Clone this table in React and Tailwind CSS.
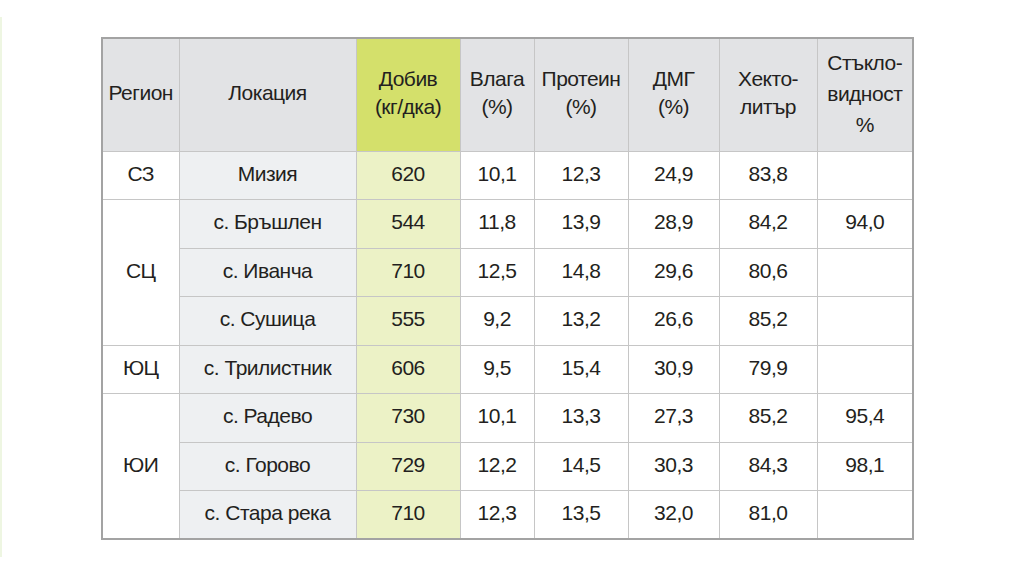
import React from 'react';

const rows = [
  { region: 'СЗ', span: 1, loc: 'Мизия', yield: '620', moist: '10,1', prot: '12,3', dmg: '24,9', hl: '83,8', glass: '' },
  { region: 'СЦ', span: 3, loc: 'с. Бръшлен', yield: '544', moist: '11,8', prot: '13,9', dmg: '28,9', hl: '84,2', glass: '94,0' },
  { loc: 'с. Иванча', yield: '710', moist: '12,5', prot: '14,8', dmg: '29,6', hl: '80,6', glass: '' },
  { loc: 'с. Сушица', yield: '555', moist: '9,2', prot: '13,2', dmg: '26,6', hl: '85,2', glass: '' },
  { region: 'ЮЦ', span: 1, loc: 'с. Трилистник', yield: '606', moist: '9,5', prot: '15,4', dmg: '30,9', hl: '79,9', glass: '' },
  { region: 'ЮИ', span: 3, loc: 'с. Радево', yield: '730', moist: '10,1', prot: '13,3', dmg: '27,3', hl: '85,2', glass: '95,4' },
  { loc: 'с. Горово', yield: '729', moist: '12,2', prot: '14,5', dmg: '30,3', hl: '84,3', glass: '98,1' },
  { loc: 'с. Стара река', yield: '710', moist: '12,3', prot: '13,5', dmg: '32,0', hl: '81,0', glass: '' },
];

const cell = 'border-[1.5px] border-[#c6c6c6] text-center align-middle px-0 pt-0 pb-[3px]';

export default function App() {
  return (
    <div
      lang="bg"
      className="flex h-[576px] w-[1024px] bg-white text-[#231f20]"
      style={{ fontFamily: '"Liberation Sans", Arial, sans-serif' }}
    >
      {/* faint page edge */}
      <div className="mt-[17px] h-[540px] w-[2px] bg-[#eef6e2]" />

      <table className="ml-[99px] mt-[37px] h-[501px] w-[811px] table-fixed border-collapse border-2 border-[#a3a3a3] text-[21px] leading-[28px] tracking-[-0.5px]">
        <colgroup>
          <col className="w-[77px]" />
          <col className="w-[177px]" />
          <col className="w-[104px]" />
          <col className="w-[74px]" />
          <col className="w-[94px]" />
          <col className="w-[91px]" />
          <col className="w-[98px]" />
          <col className="w-[96px]" />
        </colgroup>
        <thead>
          <tr className="h-[113px] bg-[#e2e3e5]">
            <th className={`${cell} font-normal`}>Регион</th>
            <th className={`${cell} font-normal`}>Локация</th>
            <th className={`${cell} font-normal bg-[#d4e06b]`}>Добив<br />(кг/дка)</th>
            <th className={`${cell} font-normal`}>Влага<br />(%)</th>
            <th className={`${cell} font-normal`}>Протеин<br />(%)</th>
            <th className={`${cell} font-normal`}>ДМГ<br />(%)</th>
            <th className={`${cell} font-normal`}>Хекто-<br />литър</th>
            <th className={`${cell} font-normal leading-[31px]`}>Стъкло-<br />видност<br />%</th>
          </tr>
        </thead>
        <tbody>
          {rows.map((r, i) => (
            <tr key={i} className="h-[48.5px]">
              {r.region && (
                <td rowSpan={r.span} className={`${cell} bg-white`}>{r.region}</td>
              )}
              <td className={`${cell} bg-[#eef0f2]`}>{r.loc}</td>
              <td className={`${cell} bg-[#ecf2c6]`}>{r.yield}</td>
              <td className={cell}>{r.moist}</td>
              <td className={cell}>{r.prot}</td>
              <td className={cell}>{r.dmg}</td>
              <td className={cell}>{r.hl}</td>
              <td className={cell}>{r.glass}</td>
            </tr>
          ))}
        </tbody>
      </table>
    </div>
  );
}
